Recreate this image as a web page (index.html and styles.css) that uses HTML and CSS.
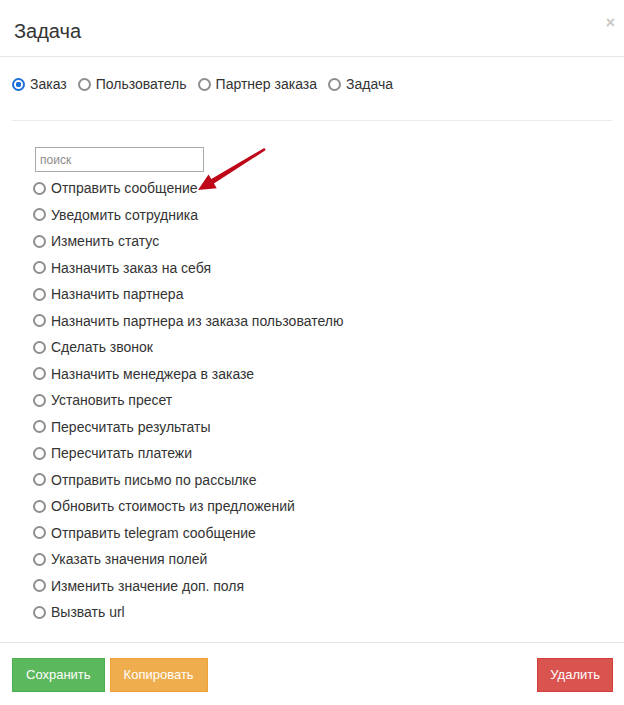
FILE: index.html
```html
<!DOCTYPE html>
<html lang="ru">
<head>
    <meta charset="utf-8">
    <title>Задача</title>
    <link rel="stylesheet" href="styles.css">
</head>
<body>
    <div id="modal">
        <div class="modal-header">
            <h4 class="modal-title">Задача</h4>
            <span class="close">&times;</span>
        </div>
        <div class="modal-body">
            <div class="target-row">
                <label class="radio"><span class="dot checked"></span>Заказ</label>
                <label class="radio"><span class="dot"></span>Пользователь</label>
                <label class="radio"><span class="dot"></span>Партнер заказа</label>
                <label class="radio"><span class="dot"></span>Задача</label>
            </div>
            <div class="actions">
                <input class="search" type="text" placeholder="поиск">
                <label class="item"><span class="dot"></span>Отправить сообщение</label>
                <label class="item"><span class="dot"></span>Уведомить сотрудника</label>
                <label class="item"><span class="dot"></span>Изменить статус</label>
                <label class="item"><span class="dot"></span>Назначить заказ на себя</label>
                <label class="item"><span class="dot"></span>Назначить партнера</label>
                <label class="item"><span class="dot"></span>Назначить партнера из заказа пользователю</label>
                <label class="item"><span class="dot"></span>Сделать звонок</label>
                <label class="item"><span class="dot"></span>Назначить менеджера в заказе</label>
                <label class="item"><span class="dot"></span>Установить пресет</label>
                <label class="item"><span class="dot"></span>Пересчитать результаты</label>
                <label class="item"><span class="dot"></span>Пересчитать платежи</label>
                <label class="item"><span class="dot"></span>Отправить письмо по рассылке</label>
                <label class="item"><span class="dot"></span>Обновить стоимость из предложений</label>
                <label class="item"><span class="dot"></span>Отправить telegram сообщение</label>
                <label class="item"><span class="dot"></span>Указать значения полей</label>
                <label class="item"><span class="dot"></span>Изменить значение доп. поля</label>
                <label class="item"><span class="dot"></span>Вызвать url</label>
                <svg class="arrow" width="80" height="50" viewBox="190 145 80 50">
                    <polygon fill="#bf0618" points="198,190 208.5,174.4 211.3,179.1 264.3,147.9 265.7,150.1 213.9,183.5 216.7,188.2"/>
                </svg>
            </div>
        </div>
        <div class="modal-footer">
            <button class="btn green">Сохранить</button>
            <button class="btn orange">Копировать</button>
            <span class="spacer"></span>
            <button class="btn red">Удалить</button>
        </div>
    </div>
</body>
</html>
```

FILE: styles.css
```css
body{
    margin: 0;
    background-color: #fff;
    font-family: 'Liberation Sans', Arial, sans-serif;
    color: #333;
}
#modal{
    width: 624px;
    height: 705px;
}
.modal-header{
    display: flex;
    justify-content: space-between;
    padding: 20px 14px 13px 14px;
    border-bottom: 1px solid #e5e5e5;
}
.modal-title{
    margin: 0;
    font-weight: normal;
    font-size: 20px;
    line-height: 23px;
    color: #333;
}
.close{
    margin-top: -6px;
    margin-right: -5px;
    font-size: 16px;
    font-weight: bold;
    color: #c8c8c8;
}
.modal-body{
    padding: 0 12px;
}
.target-row{
    display: flex;
    gap: 11px;
    height: 20px;
    align-items: center;
    margin-top: 17px;
    padding-bottom: 26px;
    border-bottom: 1px solid #eaeaea;
    font-size: 14px;
}
.radio, .item{
    display: flex;
    align-items: center;
}
.dot{
    width: 9px;
    height: 9px;
    border: 2px solid #8e8e8e;
    border-radius: 50%;
    margin-right: 5px;
    flex-shrink: 0;
}
.dot.checked{
    border-color: #1e6fd9;
    background: radial-gradient(circle, #1e6fd9 0 2.5px, #fff 3px);
}
.actions{
    position: relative;
    padding: 26px 0 12px 21px;
    font-size: 14px;
}
.search{
    display: block;
    box-sizing: border-box;
    width: 169px;
    height: 25px;
    margin: 0 0 3px 2px;
    padding: 2px 4px;
    border: 1px solid #a9a9a9;
    font-family: 'Liberation Sans', Arial, sans-serif;
    font-size: 12px;
    color: #333;
}
.search::placeholder{
    color: #8c8c8c;
}
.item{
    height: 26.5px;
}
.arrow{
    position: absolute;
    left: 178px;
    top: 24px;
}
.modal-footer{
    display: flex;
    gap: 5px;
    margin-top: 4px;
    padding: 15px 11px 15px 12px;
    border-top: 1px solid #e5e5e5;
}
.spacer{
    flex: 1;
}
.btn{
    height: 34px;
    padding: 0 13px;
    border: 1px solid;
    font-family: 'Liberation Sans', Arial, sans-serif;
    font-size: 13px;
    color: #fff;
    cursor: pointer;
}
.red{
    padding: 0 12px;
}
.green{
    background-color: #5cb85c;
    border-color: #4cae4c;
}
.orange{
    background-color: #f0ad4e;
    border-color: #eea236;
}
.red{
    background-color: #d9534f;
    border-color: #d43f3a;
}
```
